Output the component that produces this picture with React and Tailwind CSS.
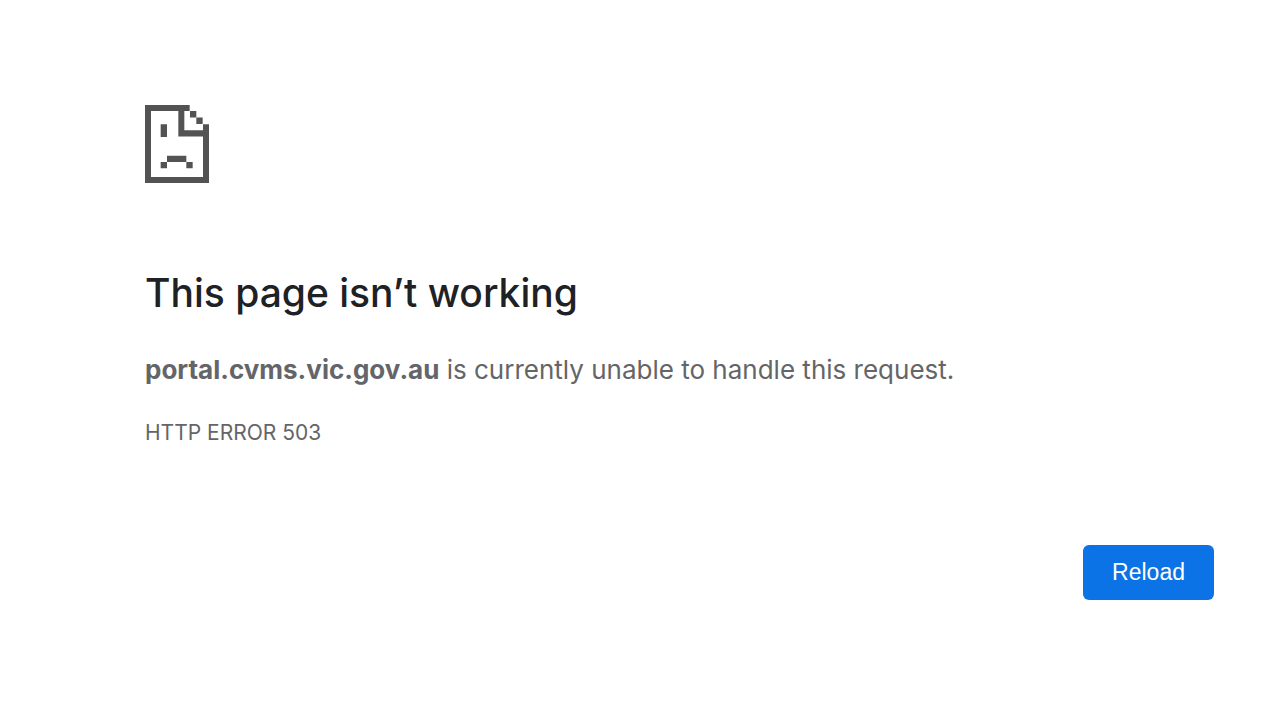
import React from 'react';

const SadPageIcon = () => (
  <svg
    className="w-16 h-[78px] text-[#535353]"
    viewBox="0 0 192 231"
    preserveAspectRatio="none"
    fill="currentColor"
    role="img"
    aria-label="Page error"
  >
    {/* Page outline with the folded corner */}
    <path d="M0 0H134V18H18V213H174V93H100V18H118V75H174V57H192V231H0Z" />
    <path d="M135 18H154V37H135ZM154 37H173V56H154Z" />
    {/* Face */}
    <path d="M47 57H66V95H47ZM66 150H124V169H66ZM47 169H66V187H47ZM124 169H143V187H124Z" />
  </svg>
);

const App = () => {
  const handleReload = () => window.location.reload();

  return (
    <main className="min-h-screen bg-white pt-[105px] pl-[145px] pr-[66px] font-[Inter,'Liberation_Sans',sans-serif] text-[#646568]">
      <SadPageIcon />
      <h1 className="mt-[84px] text-[39px] leading-[52px] font-medium text-[#202124]">
        This page isn’t working
      </h1>
      <p className="mt-[31px] text-[26px] leading-[40px]">
        <strong className="font-bold">portal.cvms.vic.gov.au</strong> is currently unable to handle this request.
      </p>
      <p className="mt-[27px] text-[21px] leading-[32px]">HTTP ERROR 503</p>
      <div className="mt-24 flex justify-end">
        <button
          type="button"
          onClick={handleReload}
          className="h-[55px] px-[29px] rounded-md bg-[#0b73e6] font-['Liberation_Sans',Arial,sans-serif] text-[23px] text-white cursor-pointer"
        >
          Reload
        </button>
      </div>
    </main>
  );
};

export default App;
